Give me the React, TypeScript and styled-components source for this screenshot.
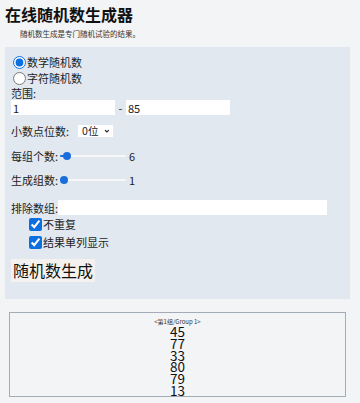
import React from "react";
import styled, { createGlobalStyle } from "styled-components";

const Global = createGlobalStyle`
  html, body { margin: 0; padding: 0; background: #f3f4f6; }
  body {
    font-family: "Noto Sans CJK SC", "Noto Sans", "Liberation Sans", sans-serif;
    color: #222;
  }
  * { box-sizing: border-box; }
`;

const Page = styled.div`
  padding: 4px 5px 0 5px;
  width: 360px;
`;

const Title = styled.h1`
  margin: 0;
  font-size: 16px;
  line-height: 20px;
  font-weight: 700;
  color: #111;
`;

const Subtitle = styled.p`
  margin: 4px 0 0 15px;
  font-size: 7.5px;
  line-height: 11px;
  color: #333;
`;

const Panel = styled.div`
  margin-top: 8px;
  width: 345px;
  background: #e2e8f0;
  padding: 7px 6px 17px 6px;
  display: flex;
  flex-direction: column;
  font-size: 11px;
`;

const Row = styled.label<{ $h?: number; $mt?: number; $indent?: number }>`
  display: flex;
  align-items: center;
  height: ${(p) => p.$h ?? 14}px;
  margin-top: ${(p) => p.$mt ?? 0}px;
  padding-left: ${(p) => p.$indent ?? 0}px;
  line-height: 14px;
  white-space: nowrap;
`;

const Radio = styled.input.attrs({ type: "radio" })`
  width: 13px;
  height: 13px;
  margin: 0 1px 0 2px;
  accent-color: #0b6fe0;
`;

const Check = styled.input.attrs({ type: "checkbox" })`
  width: 13px;
  height: 13px;
  margin: 0 1px 0 0;
  accent-color: #0b6fe0;
`;

const TextInput = styled.input<{ $w: number }>`
  width: ${(p) => p.$w}px;
  height: 15px;
  border: none;
  outline: none;
  background: #fff;
  padding: 0 2px;
  font-family: inherit;
  font-size: 11px;
  color: #222;
`;

const Dash = styled.span`
  width: 11px;
  text-align: center;
`;

const SelectBox = styled.span`
  display: inline-flex;
  align-items: center;
  height: 12px;
  width: 35px;
  margin-left: 9px;
  background: #fff;
  padding: 0 3px 0 4px;
`;

const Select = styled.select`
  appearance: none;
  -webkit-appearance: none;
  border: none;
  outline: none;
  background: transparent;
  font-family: inherit;
  font-size: 10.5px;
  line-height: 12px;
  height: 12px;
  padding: 0;
  width: 22px;
  color: #222;
`;

const Chevron = styled.svg`
  width: 6px;
  height: 6px;
  margin-left: 1px;
`;

const Range = styled.input.attrs({ type: "range" })`
  -webkit-appearance: none;
  appearance: none;
  width: 66px;
  height: 10px;
  margin: 0 3px 0 2px;
  background: transparent;
  &::-webkit-slider-runnable-track {
    height: 2px;
    border-radius: 1px;
    background: linear-gradient(to right, #1a6fdc 0 6px, #f7f7f7 6px);
  }
  &::-webkit-slider-thumb {
    -webkit-appearance: none;
    width: 8px;
    height: 8px;
    border-radius: 50%;
    background: #1a6fdc;
    margin-top: -3px;
  }
`;

const Button = styled.button`
  margin-top: 9px;
  align-self: flex-start;
  height: 23px;
  padding: 0 2px;
  border: none;
  background: #f4f1ef;
  font-family: inherit;
  font-size: 16px;
  line-height: 23px;
  color: #111;
`;

const Results = styled.div`
  margin: 13px 0 0 4px;
  width: 337px;
  height: 85px;
  border: 1px solid #a3abb7;
  padding-top: 4px;
  display: flex;
  flex-direction: column;
  align-items: center;
`;

const GroupHead = styled.div`
  font-size: 6px;
  line-height: 9px;
  color: #333;
`;

const Num = styled.div`
  font-size: 13.5px;
  line-height: 11.8px;
  height: 11.8px;
  color: #111;
`;

const nums = [45, 77, 33, 80, 79, 13];

export default function App() {
  return (
    <Page>
      <Global />
      <Title>在线随机数生成器</Title>
      <Subtitle>随机数生成是专门随机试验的结果。</Subtitle>
      <Panel>
        <Row $h={16}>
          <Radio name="t" defaultChecked />
          数学随机数
        </Row>
        <Row $h={16}>
          <Radio name="t" />
          字符随机数
        </Row>
        <Row>范围:</Row>
        <Row $h={15}>
          <TextInput $w={104} defaultValue="1" />
          <Dash>-</Dash>
          <TextInput $w={104} defaultValue="85" />
        </Row>
        <Row $mt={9}>
          小数点位数:
          <SelectBox>
            <Select defaultValue="0">
              <option value="0">0位</option>
            </Select>
            <Chevron viewBox="0 0 6 6">
              <path d="M1 2 L3 4 L5 2" fill="none" stroke="#222" strokeWidth="1.2" />
            </Chevron>
          </SelectBox>
        </Row>
        <Row $mt={11}>
          每组个数:
          <Range min={1} max={100} defaultValue={6} />6
        </Row>
        <Row $mt={10}>
          生成组数:
          <Range min={1} max={100} defaultValue={1} />1
        </Row>
        <Row $mt={13} $h={15}>
          排除数组:
          <TextInput $w={269} />
        </Row>
        <Row $h={16} $mt={1} $indent={18}>
          <Check defaultChecked />
          不重复
        </Row>
        <Row $h={16} $mt={2} $indent={18}>
          <Check defaultChecked />
          结果单列显示
        </Row>
        <Button>随机数生成</Button>
      </Panel>
      <Results>
        <GroupHead>&lt;第1组/Group 1&gt;</GroupHead>
        {nums.map((n, i) => (
          <Num key={i}>{n}</Num>
        ))}
      </Results>
    </Page>
  );
}
